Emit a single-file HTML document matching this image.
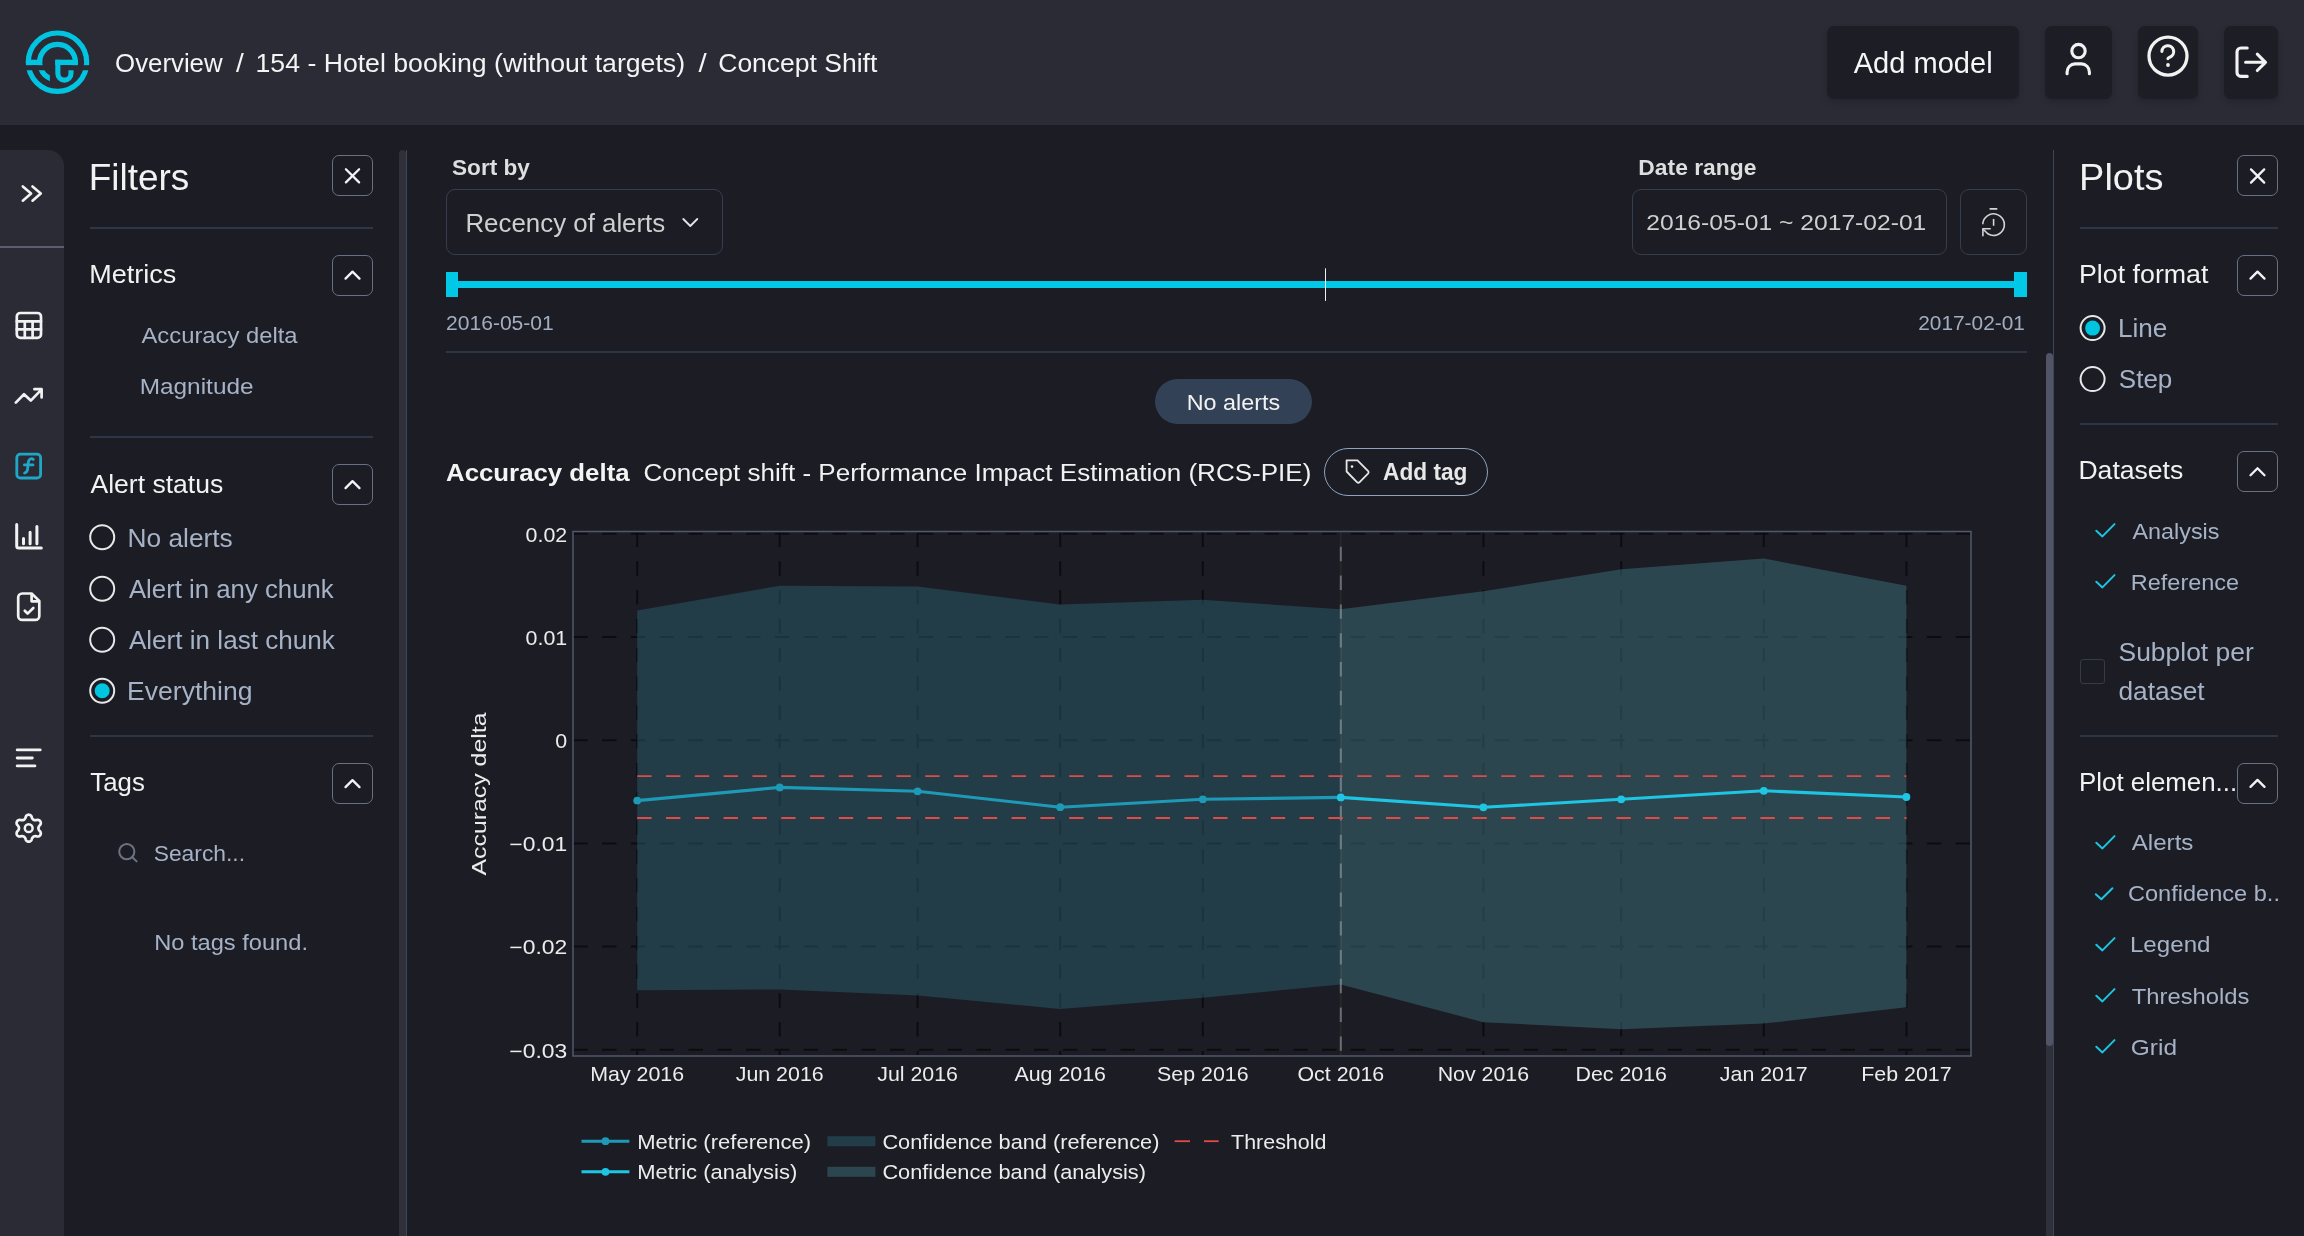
<!DOCTYPE html>
<html><head><meta charset="utf-8">
<style>
*{margin:0;padding:0;box-sizing:border-box}
html,body{width:2304px;height:1236px;overflow:hidden;background:#1c1c25;font-family:"Liberation Sans",sans-serif;color:#f2f2f2}
.a{position:absolute;white-space:nowrap}
.t{position:absolute;white-space:nowrap;line-height:1}
svg{position:absolute;overflow:visible}
.btn{position:absolute;border:1.6px solid #687184;border-radius:7px;background:#1c1c25}
.sep{position:absolute;height:2px;background:#2c3646}
.lbl{color:#a9b4c4}
</style></head><body>
<!-- HEADER -->
<div class="a" style="left:0;top:0;width:2304px;height:125px;background:#2b2b36"></div>
<svg style="left:0;top:0" width="120" height="125" viewBox="0 0 120 125">
<defs><clipPath id="fc"><rect x="0" y="70.25" width="49.9" height="30"/></clipPath></defs>
<g fill="none" stroke="#00c4e0" stroke-width="5.2">
<circle cx="57.5" cy="62.2" r="29.2"/>
<path d="M40.31,67 A17.85,17.85 0 1 1 74.69,67"/>
</g>
<g fill="#00c4e0">
<rect x="26.2" y="59.7" width="16" height="5.5"/>
<rect x="55.3" y="59.7" width="22.6" height="5.5"/>
</g>
<rect x="20" y="65.2" width="80" height="5.05" fill="#2b2b36"/>
<g fill="none" stroke="#00c4e0" stroke-width="5.1">
<path d="M40.06,66 A17.85,17.85 0 0 0 52,79.2" clip-path="url(#fc)"/>
<path d="M57.85,59.7 V73.5 A6.55,6.55 0 0 0 71,73.5 V70.25"/>
</g>
</svg>

<div class="a" style="left:1827px;top:26px;width:192px;height:72.6px;background:#1d1d26;border-radius:7px;box-shadow:0 3px 6px rgba(0,0,0,0.18)"></div>
<div class="a" style="left:2045px;top:26px;width:67px;height:72.6px;background:#1d1d26;border-radius:7px;box-shadow:0 3px 6px rgba(0,0,0,0.18)"></div>
<div class="a" style="left:2138px;top:26px;width:60px;height:72.6px;background:#1d1d26;border-radius:7px;box-shadow:0 3px 6px rgba(0,0,0,0.18)"></div>
<div class="a" style="left:2224px;top:26px;width:54px;height:72.6px;background:#1d1d26;border-radius:7px;box-shadow:0 3px 6px rgba(0,0,0,0.18)"></div>


<svg style="left:0;top:0" width="2304" height="125" viewBox="0 0 2304 125">
<g fill="none" stroke="#f2f2f2" stroke-width="3.1" stroke-linecap="round" stroke-linejoin="round">
<circle cx="2078.5" cy="51.1" r="6.7"/>
<path d="M2067.1,73.7 v-1.8 a8,8 0 0 1 8,-8 h6.3 a8,8 0 0 1 8,8 v1.8"/>
<circle cx="2168" cy="56.1" r="19" stroke-width="3.3"/>
<path d="M2161.9,51.4 A5.9,5.9 0 1 1 2170.2,57 Q2167.9,57.9 2167.9,58.6"/>
<path d="M2247.2,48 H2241 a4,4 0 0 0 -4,4 V72.4 a4,4 0 0 0 4,4 H2247.2"/>
<path d="M2245.6,62.3 H2265.5 M2257.3,54.2 L2265.5,62.3 L2257.3,70.5"/>
</g>
<circle cx="2168" cy="65" r="1.9" fill="#f2f2f2"/>
</svg>

<!-- LEFT SIDEBAR -->
<div class="a" style="left:0;top:150px;width:64px;height:1086px;background:#2b2b36;border-top-right-radius:16px"></div>
<div class="a" style="left:0;top:246px;width:64px;height:2px;background:#5a6070"></div>


<svg style="left:0;top:0" width="64" height="1236" viewBox="0 0 64 1236">
<g fill="none" stroke="#f2f2f2" stroke-width="2.7" stroke-linecap="round" stroke-linejoin="round">
<path d="M22.8,186.4 L31.1,193.4 L22.8,200.7 M32.5,186.4 L40.8,193.4 L32.5,200.7" stroke-width="2.6"/>
<rect x="16.8" y="313" width="24.2" height="24.8" rx="3.6"/>
<path d="M16.8,321.4 H41 M16.8,329.4 H41 M24.8,321.4 V337.8 M32.6,321.4 V337.8"/>
<path d="M15.8,402.6 L24,394.2 L30.8,400.6 L41.4,389.6 M34.4,389.2 H41.6 V397.4"/>
<path d="M16.7,524.4 V546 a2,2 0 0 0 2,2 H41.3 M23.5,538.6 V543.8 M30.1,532.2 V543.8 M36.9,526.4 V543.8" stroke-width="3"/>
<path d="M31.6,593.5 H22.2 a4,4 0 0 0 -4,4 V615.9 a4,4 0 0 0 4,4 H35.3 a4,4 0 0 0 4,-4 V600.9 Z M31.6,593.5 V601.3 H39.3"/>
<path d="M24.8,610.7 L27.6,613.6 L33.3,608"/>
<path d="M17.2,749.9 H40.2 M17.2,758 H32.3 M17.2,765.9 H34.9" stroke-width="2.9"/>
</g>
<g fill="none" stroke="#1fa8c6" stroke-width="2.8" stroke-linecap="round" stroke-linejoin="round">
<rect x="16.8" y="454.2" width="23.8" height="23.8" rx="3.6"/>
<path d="M33.3,459.4 C31,457.6 28.6,459.6 28.3,462.5 L27.6,468.8 C27.2,472.4 25.8,472.6 24.6,473 M24.4,464.9 H33"/>
</g>
<g transform="translate(28.7,828.2)" fill="none" stroke="#f2f2f2" stroke-width="2.7" stroke-linejoin="round">
<path d="M9.70,0.00 L9.74,0.43 L9.84,0.86 L10.02,1.32 L10.27,1.81 L10.60,2.35 L11.20,3.00 L11.77,3.71 L12.00,4.37 L12.09,5.01 L12.07,5.63 L11.93,6.21 L11.69,6.75 L11.35,7.23 L10.91,7.64 L10.39,7.97 L9.78,8.21 L9.10,8.34 L8.20,8.20 L7.34,8.01 L6.70,7.99 L6.15,8.02 L5.67,8.09 L5.24,8.22 L4.85,8.40 L4.50,8.64 L4.18,8.96 L3.87,9.34 L3.57,9.80 L3.27,10.36 L3.00,11.20 L2.67,12.05 L2.22,12.58 L1.71,12.98 L1.16,13.27 L0.59,13.44 L0.00,13.50 L-0.59,13.44 L-1.16,13.27 L-1.71,12.98 L-2.22,12.58 L-2.67,12.05 L-3.00,11.20 L-3.27,10.36 L-3.57,9.80 L-3.87,9.34 L-4.18,8.96 L-4.50,8.64 L-4.85,8.40 L-5.24,8.22 L-5.67,8.09 L-6.15,8.02 L-6.70,7.99 L-7.34,8.01 L-8.20,8.20 L-9.10,8.34 L-9.78,8.21 L-10.39,7.97 L-10.91,7.64 L-11.35,7.23 L-11.69,6.75 L-11.93,6.21 L-12.07,5.63 L-12.09,5.01 L-12.00,4.37 L-11.77,3.71 L-11.20,3.00 L-10.60,2.35 L-10.27,1.81 L-10.02,1.32 L-9.84,0.86 L-9.74,0.43 L-9.70,0.00 L-9.74,-0.43 L-9.84,-0.86 L-10.02,-1.32 L-10.27,-1.81 L-10.60,-2.35 L-11.20,-3.00 L-11.77,-3.71 L-12.00,-4.37 L-12.09,-5.01 L-12.07,-5.63 L-11.93,-6.21 L-11.69,-6.75 L-11.35,-7.23 L-10.91,-7.64 L-10.39,-7.97 L-9.78,-8.21 L-9.10,-8.34 L-8.20,-8.20 L-7.34,-8.01 L-6.70,-7.99 L-6.15,-8.02 L-5.67,-8.09 L-5.24,-8.22 L-4.85,-8.40 L-4.50,-8.64 L-4.18,-8.96 L-3.87,-9.34 L-3.57,-9.80 L-3.27,-10.36 L-3.00,-11.20 L-2.67,-12.05 L-2.22,-12.58 L-1.71,-12.98 L-1.16,-13.27 L-0.59,-13.44 L-0.00,-13.50 L0.59,-13.44 L1.16,-13.27 L1.71,-12.98 L2.22,-12.58 L2.67,-12.05 L3.00,-11.20 L3.27,-10.36 L3.57,-9.80 L3.87,-9.34 L4.18,-8.96 L4.50,-8.64 L4.85,-8.40 L5.24,-8.22 L5.67,-8.09 L6.15,-8.02 L6.70,-7.99 L7.34,-8.01 L8.20,-8.20 L9.10,-8.34 L9.78,-8.21 L10.39,-7.97 L10.91,-7.64 L11.35,-7.23 L11.69,-6.75 L11.93,-6.21 L12.07,-5.63 L12.09,-5.01 L12.00,-4.37 L11.77,-3.71 L11.20,-3.00 L10.60,-2.35 L10.27,-1.81 L10.02,-1.32 L9.84,-0.86 L9.74,-0.43 Z"/>
<circle r="3.9" stroke-width="2.5"/>
</g>
</svg>

<!-- FILTER PANEL -->
<div class="btn" style="left:332px;top:155px;width:41px;height:41px"></div>
<div class="sep" style="left:90px;top:227px;width:283px"></div>
<div class="btn" style="left:332px;top:255px;width:41px;height:41px"></div>
<div class="sep" style="left:90px;top:436px;width:283px"></div>
<div class="btn" style="left:332px;top:464px;width:41px;height:41px"></div>
<div class="sep" style="left:90px;top:735px;width:283px"></div>
<div class="btn" style="left:332px;top:763px;width:41px;height:41px"></div>
<div class="a" style="left:399px;top:150px;width:7px;height:1100px;background:#30303a;border-radius:3.5px"></div><div class="a" style="left:405.8px;top:150px;width:1.4px;height:1086px;background:#3a465a"></div>



<!-- MAIN -->
<div class="a" style="left:446px;top:189px;width:277px;height:66px;border:1.5px solid #343e4e;border-radius:9px"></div>
<div class="a" style="left:1632px;top:189px;width:315px;height:66px;border:1.5px solid #343e4e;border-radius:9px"></div>
<div class="a" style="left:1960px;top:189px;width:67px;height:66px;border:1.5px solid #343e4e;border-radius:9px"></div>
<div class="a" style="left:446px;top:281px;width:1580px;height:7px;background:#00c8e6"></div>
<div class="a" style="left:446px;top:272px;width:12px;height:25px;background:#00c8e6"></div>
<div class="a" style="left:2014px;top:272px;width:13px;height:25px;background:#00c8e6"></div>
<div class="a" style="left:1324.8px;top:268.4px;width:1.7px;height:32.6px;background:#f0f0f0;border-radius:1px"></div>
<div class="a" style="left:446px;top:351px;width:1581px;height:2px;background:#2c3646"></div>
<div class="a" style="left:1155px;top:379px;width:157px;height:45px;background:#324155;border-radius:23px"></div>
<div class="a" style="left:1324px;top:448px;width:164px;height:48px;border:1.9px solid #8fa3bc;border-radius:24px"></div>
<svg style="left:0;top:0" width="2304" height="1236" viewBox="0 0 2304 1236">
<g fill="none" stroke="#e6e6e6" stroke-width="1.8" stroke-linecap="round" stroke-linejoin="round">
<path d="M683.3,219 L690.3,226 L697.3,219"/>
<path d="M1346.6,460.3 H1357.5 L1368.4,471.4 Q1369,472.6 1368,473.7 L1359.4,482.3 Q1358.3,483.3 1357.2,482.3 L1346.6,471.5 Z"/>
</g>
<circle cx="1352" cy="466.6" r="1.3" fill="#e6e6e6"/>
<g fill="none" stroke="#d4d4d4" stroke-width="1.6" stroke-linecap="round" stroke-linejoin="round">
<path d="M1990.2,208.9 H1996.7"/>
<path d="M1993.6,219.6 V225.2"/>
<path d="M1982.8,223.6 A10.8,10.8 0 1 1 1987.8,233.8 L1983.2,229.3"/>
<path d="M1990.2,228.8 H1982.9 V235.8"/>
</g>
</svg>
<!-- main scrollbar -->
<div class="a" style="left:2046px;top:1040px;width:7px;height:200px;background:#30303a"></div><div class="a" style="left:2052.8px;top:150px;width:1.5px;height:1086px;background:#3a465a"></div>
<div class="a" style="left:2046px;top:353px;width:7px;height:693px;background:#505464;border-radius:3.5px"></div>

<!-- PLOTS PANEL -->
<div class="btn" style="left:2237px;top:155px;width:41px;height:41px"></div>
<div class="sep" style="left:2080px;top:227px;width:198px"></div>
<div class="btn" style="left:2237px;top:255px;width:41px;height:41px"></div>
<div class="sep" style="left:2080px;top:423px;width:198px"></div>
<div class="btn" style="left:2237px;top:451px;width:41px;height:41px"></div>
<div class="a" style="left:2080px;top:659px;width:25px;height:25px;border:1.5px solid #323c4c;border-radius:3px"></div>
<div class="sep" style="left:2080px;top:735px;width:198px"></div>
<div class="btn" style="left:2237px;top:763px;width:41px;height:41px"></div>
<svg style="left:0;top:0" width="2304" height="1236" viewBox="0 0 2304 1236">
<g fill="none" stroke="#1ec4e0" stroke-width="2" stroke-linecap="round" stroke-linejoin="round">
<path d="M2096.3,530.7 L2102.4,536.4 L2114.5,524.1"/>
<path d="M2096.3,581.7 L2102.4,587.4 L2114.5,575.1"/>
<path d="M2096.3,842.7 L2102.4,848.4 L2114.5,836.1"/>
<path d="M2095.8,894.2 L2101.3,899.3 L2112.4,888.3"/>
<path d="M2096.3,944.7 L2102.4,950.4 L2114.5,938.1"/>
<path d="M2096.3,995.7 L2102.4,1001.4 L2114.5,989.1"/>
<path d="M2096.3,1046.7 L2102.4,1052.4 L2114.5,1040.1"/>
</g>
</svg>

<!-- CHART -->
<svg style="left:0;top:0" width="2304" height="1236" viewBox="0 0 2304 1236">
<g stroke="#0c0c10" stroke-width="2" stroke-dasharray="14.4 14.4">
<line x1="573.3" y1="533.8" x2="1971" y2="533.8"/><line x1="573.3" y1="637.0" x2="1971" y2="637.0"/><line x1="573.3" y1="740.2" x2="1971" y2="740.2"/><line x1="573.3" y1="843.4" x2="1971" y2="843.4"/><line x1="573.3" y1="946.6" x2="1971" y2="946.6"/><line x1="573.3" y1="1049.8" x2="1971" y2="1049.8"/><line x1="637.2" y1="532.5" x2="637.2" y2="1055"/><line x1="779.7" y1="532.5" x2="779.7" y2="1055"/><line x1="917.6" y1="532.5" x2="917.6" y2="1055"/><line x1="1060.2" y1="532.5" x2="1060.2" y2="1055"/><line x1="1202.8" y1="532.5" x2="1202.8" y2="1055"/><line x1="1340.8" y1="532.5" x2="1340.8" y2="1055"/><line x1="1483.4" y1="532.5" x2="1483.4" y2="1055"/><line x1="1621.2" y1="532.5" x2="1621.2" y2="1055"/><line x1="1763.8" y1="532.5" x2="1763.8" y2="1055"/><line x1="1906.4" y1="532.5" x2="1906.4" y2="1055"/>
</g>
<polygon points="637.2,610.6 779.7,585.7 917.6,586.6 1060.2,604.5 1202.8,599.8 1340.8,609.2 1340.8,984.6 1202.8,997.8 1060.2,1009.0 917.6,995.5 779.7,989.4 637.2,990.3" fill="#285c6b" fill-opacity="0.5" />
<polygon points="1340.8,609.2 1483.4,591.3 1621.2,569.3 1763.8,558.5 1906.4,585.7 1906.4,1007.2 1763.8,1023.6 1621.2,1029.2 1483.4,1022.2 1340.8,984.6" fill="#3c707b" fill-opacity="0.5" />
<line x1="1340.8" y1="532.5" x2="1340.8" y2="1055" stroke="#c8c8c8" stroke-opacity="0.15" stroke-width="2"/><line x1="1340.8" y1="546.8" x2="1340.8" y2="1055" stroke="#c8c8c8" stroke-opacity="0.37" stroke-width="2" stroke-dasharray="14.4 14.4"/>
<rect x="573" y="531.5" width="1398" height="524.5" fill="none" stroke="#50586a" stroke-width="1.5"/>
<g stroke="#e04a48" stroke-width="1.8" stroke-dasharray="14.4 14.4"><line x1="637.2" y1="776.2" x2="1906.4" y2="776.2"/><line x1="637.2" y1="818" x2="1906.4" y2="818"/></g>
<polyline points="637.2,800.6 779.7,787.4 917.6,791.3 1060.2,807.2 1202.8,799.3 1340.8,797.4" fill="none" stroke="#1e9ab6" stroke-width="3.1" stroke-linejoin="round"/>
<polyline points="1340.8,797.4 1483.4,807.3 1621.2,799.3 1763.8,790.8 1906.4,797.0" fill="none" stroke="#1ec6e4" stroke-width="3.1" stroke-linejoin="round"/>
<g fill="#1e9ab6"><circle cx="637.2" cy="800.6" r="3.9"/><circle cx="779.7" cy="787.4" r="3.9"/><circle cx="917.6" cy="791.3" r="3.9"/><circle cx="1060.2" cy="807.2" r="3.9"/><circle cx="1202.8" cy="799.3" r="3.9"/></g>
<g fill="#1ec6e4"><circle cx="1340.8" cy="797.4" r="3.9"/><circle cx="1483.4" cy="807.3" r="3.9"/><circle cx="1621.2" cy="799.3" r="3.9"/><circle cx="1763.8" cy="790.8" r="3.9"/><circle cx="1906.4" cy="797.0" r="3.9"/></g>
<g stroke-width="3.1"><line x1="581.5" y1="1141.2" x2="629.4" y2="1141.2" stroke="#1e9ab6"/><circle cx="605.5" cy="1141.2" r="3.9" fill="#1e9ab6"/><line x1="581.5" y1="1171.8" x2="629.4" y2="1171.8" stroke="#1ec6e4"/><circle cx="605.5" cy="1171.8" r="3.9" fill="#1ec6e4"/></g>
<rect x="827.4" y="1136.2" width="48" height="10" fill="#285c6b" fill-opacity="0.5"/><rect x="827.4" y="1166.8" width="48" height="10" fill="#3c707b" fill-opacity="0.5"/>
<g stroke="#e04a48" stroke-width="1.8"><line x1="1174.6" y1="1141.2" x2="1190" y2="1141.2"/><line x1="1204" y1="1141.2" x2="1218.7" y2="1141.2"/></g>
</svg>
<svg style="left:0;top:0" width="2304" height="1236" viewBox="0 0 2304 1236"><g fill="none" stroke="#f2f2f2" stroke-width="2.3" stroke-linecap="round" stroke-linejoin="round"><path d="M345.9,169.2 L359.1,182.4 M359.1,169.2 L345.9,182.4"/><path d="M345.5,278.6 L352.5,271.6 L359.5,278.6"/><path d="M345.5,488.1 L352.5,481.1 L359.5,488.1"/><path d="M345.5,787.1 L352.5,780.1 L359.5,787.1"/><path d="M2251.0,169.4 L2264.2,182.6 M2264.2,169.4 L2251.0,182.6"/><path d="M2250.5,278.6 L2257.5,271.6 L2264.5,278.6"/><path d="M2250.5,475.3 L2257.5,468.3 L2264.5,475.3"/><path d="M2250.5,786.9 L2257.5,779.9 L2264.5,786.9"/></g><g fill="none" stroke="#e8e8e8" stroke-width="2"><circle cx="102.2" cy="537.3" r="12"/><circle cx="102.2" cy="588.8" r="12"/><circle cx="102.2" cy="639.8" r="12"/><circle cx="102.2" cy="690.8" r="12"/><circle cx="2092.6" cy="328.1" r="12"/><circle cx="2092.6" cy="379.1" r="12"/></g><circle cx="102.2" cy="690.8" r="7.5" fill="#00c4e0"/><circle cx="2092.6" cy="328.1" r="7.5" fill="#00c4e0"/><g fill="none" stroke="#6b7383" stroke-width="2" stroke-linecap="round"><circle cx="126.8" cy="851.6" r="7.6"/><path d="M132.4,857.2 L136.6,861.4"/></g></svg>
<!-- TEXT -->
<svg style="left:0;top:0;will-change:transform" width="2304" height="1236" viewBox="0 0 2304 1236" font-family="Liberation Sans">
<text x="115.08" y="72.10" font-size="25.50" font-weight="400" fill="#f4f4f4" textLength="107.52" lengthAdjust="spacingAndGlyphs">Overview</text>
<text x="235.90" y="72.10" font-size="25.50" font-weight="400" fill="#f4f4f4" textLength="7.78" lengthAdjust="spacingAndGlyphs">/</text>
<text x="255.52" y="72.10" font-size="25.50" font-weight="400" fill="#f4f4f4" textLength="429.54" lengthAdjust="spacingAndGlyphs">154 - Hotel booking (without targets)</text>
<text x="698.56" y="72.10" font-size="25.50" font-weight="400" fill="#f4f4f4" textLength="8.20" lengthAdjust="spacingAndGlyphs">/</text>
<text x="718.26" y="72.10" font-size="25.50" font-weight="400" fill="#f4f4f4" textLength="159.00" lengthAdjust="spacingAndGlyphs">Concept Shift</text>
<text x="1853.74" y="72.80" font-size="28.80" font-weight="400" fill="#f6f6f6" textLength="138.90" lengthAdjust="spacingAndGlyphs">Add model</text>
<text x="88.70" y="190.30" font-size="37.70" font-weight="400" fill="#f2f2f2" textLength="100.54" lengthAdjust="spacingAndGlyphs">Filters</text>
<text x="89.18" y="282.90" font-size="25.40" font-weight="400" fill="#f2f2f2" textLength="87.06" lengthAdjust="spacingAndGlyphs">Metrics</text>
<text x="141.48" y="342.50" font-size="22.30" font-weight="400" fill="#a6b3c6" textLength="156.12" lengthAdjust="spacingAndGlyphs">Accuracy delta</text>
<text x="139.68" y="393.50" font-size="22.30" font-weight="400" fill="#a6b3c6" textLength="113.90" lengthAdjust="spacingAndGlyphs">Magnitude</text>
<text x="90.48" y="492.70" font-size="25.90" font-weight="400" fill="#f2f2f2" textLength="132.84" lengthAdjust="spacingAndGlyphs">Alert status</text>
<text x="127.52" y="546.90" font-size="25.90" font-weight="400" fill="#a6b3c6" textLength="105.22" lengthAdjust="spacingAndGlyphs">No alerts</text>
<text x="128.90" y="597.90" font-size="25.90" font-weight="400" fill="#a6b3c6" textLength="204.86" lengthAdjust="spacingAndGlyphs">Alert in any chunk</text>
<text x="128.90" y="648.90" font-size="25.90" font-weight="400" fill="#a6b3c6" textLength="205.94" lengthAdjust="spacingAndGlyphs">Alert in last chunk</text>
<text x="127.10" y="699.90" font-size="25.90" font-weight="400" fill="#a6b3c6" textLength="125.46" lengthAdjust="spacingAndGlyphs">Everything</text>
<text x="90.32" y="791.30" font-size="25.40" font-weight="400" fill="#f2f2f2" textLength="54.50" lengthAdjust="spacingAndGlyphs">Tags</text>
<text x="153.66" y="861.20" font-size="22.90" font-weight="400" fill="#a6b3c6" textLength="91.40" lengthAdjust="spacingAndGlyphs">Search...</text>
<text x="154.18" y="949.90" font-size="22.90" font-weight="400" fill="#a6b3c6" textLength="153.80" lengthAdjust="spacingAndGlyphs">No tags found.</text>
<text x="452.00" y="174.50" font-size="22.90" font-weight="700" fill="#dedede" textLength="77.92" lengthAdjust="spacingAndGlyphs">Sort by</text>
<text x="465.44" y="232.30" font-size="25.80" font-weight="400" fill="#cfcfcf" textLength="199.80" lengthAdjust="spacingAndGlyphs">Recency of alerts</text>
<text x="1638.34" y="174.70" font-size="22.90" font-weight="700" fill="#dedede" textLength="118.08" lengthAdjust="spacingAndGlyphs">Date range</text>
<text x="1646.26" y="230.30" font-size="22.50" font-weight="400" fill="#cfcfcf" textLength="280.06" lengthAdjust="spacingAndGlyphs">2016-05-01 ~ 2017-02-01</text>
<text x="446.08" y="330.40" font-size="19.70" font-weight="400" fill="#a2aec0" textLength="107.66" lengthAdjust="spacingAndGlyphs">2016-05-01</text>
<text x="1918.24" y="330.40" font-size="19.70" font-weight="400" fill="#a2aec0" textLength="106.66" lengthAdjust="spacingAndGlyphs">2017-02-01</text>
<text x="1186.68" y="409.50" font-size="22.70" font-weight="400" fill="#f2f2f2" textLength="93.48" lengthAdjust="spacingAndGlyphs">No alerts</text>
<text x="446.00" y="481.30" font-size="24.70" font-weight="700" fill="#f4f4f4" textLength="183.60" lengthAdjust="spacingAndGlyphs">Accuracy delta</text>
<text x="643.42" y="481.40" font-size="24.70" font-weight="400" fill="#f2f2f2" textLength="667.90" lengthAdjust="spacingAndGlyphs">Concept shift - Performance Impact Estimation (RCS-PIE)</text>
<text x="1383.00" y="480.00" font-size="23.20" font-weight="700" fill="#e8e8e8" textLength="84.40" lengthAdjust="spacingAndGlyphs">Add tag</text>
<text x="2079.12" y="190.40" font-size="37.70" font-weight="400" fill="#f2f2f2" textLength="84.28" lengthAdjust="spacingAndGlyphs">Plots</text>
<text x="2079.02" y="283.10" font-size="25.40" font-weight="400" fill="#f2f2f2" textLength="129.40" lengthAdjust="spacingAndGlyphs">Plot format</text>
<text x="2117.94" y="337.10" font-size="25.90" font-weight="400" fill="#a6b3c6" textLength="49.38" lengthAdjust="spacingAndGlyphs">Line</text>
<text x="2118.84" y="387.60" font-size="25.90" font-weight="400" fill="#a6b3c6" textLength="53.48" lengthAdjust="spacingAndGlyphs">Step</text>
<text x="2078.44" y="479.40" font-size="25.40" font-weight="400" fill="#f2f2f2" textLength="104.80" lengthAdjust="spacingAndGlyphs">Datasets</text>
<text x="2132.56" y="538.90" font-size="22.30" font-weight="400" fill="#a6b3c6" textLength="86.94" lengthAdjust="spacingAndGlyphs">Analysis</text>
<text x="2130.76" y="590.20" font-size="22.30" font-weight="400" fill="#a6b3c6" textLength="108.40" lengthAdjust="spacingAndGlyphs">Reference</text>
<text x="2118.50" y="661.00" font-size="25.90" font-weight="400" fill="#a6b3c6" textLength="135.26" lengthAdjust="spacingAndGlyphs">Subplot per</text>
<text x="2118.50" y="699.70" font-size="25.90" font-weight="400" fill="#a6b3c6" textLength="86.18" lengthAdjust="spacingAndGlyphs">dataset</text>
<text x="2079.02" y="791.30" font-size="25.40" font-weight="400" fill="#f2f2f2" textLength="158.12" lengthAdjust="spacingAndGlyphs">Plot elemen...</text>
<text x="2131.74" y="850.20" font-size="22.30" font-weight="400" fill="#a6b3c6" textLength="61.68" lengthAdjust="spacingAndGlyphs">Alerts</text>
<text x="2127.92" y="901.30" font-size="22.30" font-weight="400" fill="#a6b3c6" textLength="152.06" lengthAdjust="spacingAndGlyphs">Confidence b..</text>
<text x="2129.94" y="952.40" font-size="22.30" font-weight="400" fill="#a6b3c6" textLength="80.54" lengthAdjust="spacingAndGlyphs">Legend</text>
<text x="2131.74" y="1003.50" font-size="22.30" font-weight="400" fill="#a6b3c6" textLength="117.76" lengthAdjust="spacingAndGlyphs">Thresholds</text>
<text x="2130.84" y="1054.60" font-size="22.30" font-weight="400" fill="#a6b3c6" textLength="46.14" lengthAdjust="spacingAndGlyphs">Grid</text>
<text x="637.26" y="1149.10" font-size="19.30" font-weight="400" fill="#ececec" textLength="173.90" lengthAdjust="spacingAndGlyphs">Metric (reference)</text>
<text x="637.26" y="1178.90" font-size="19.30" font-weight="400" fill="#ececec" textLength="159.98" lengthAdjust="spacingAndGlyphs">Metric (analysis)</text>
<text x="882.42" y="1149.10" font-size="19.30" font-weight="400" fill="#ececec" textLength="277.06" lengthAdjust="spacingAndGlyphs">Confidence band (reference)</text>
<text x="882.42" y="1178.90" font-size="19.30" font-weight="400" fill="#ececec" textLength="263.56" lengthAdjust="spacingAndGlyphs">Confidence band (analysis)</text>
<text x="1231.08" y="1149.10" font-size="19.30" font-weight="400" fill="#ececec" textLength="95.32" lengthAdjust="spacingAndGlyphs">Threshold</text>
<text transform="translate(637.2,1081) scale(1.080,1)" text-anchor="middle" font-size="19.80" fill="#ececec">May 2016</text>
<text transform="translate(779.7,1081) scale(1.080,1)" text-anchor="middle" font-size="19.80" fill="#ececec">Jun 2016</text>
<text transform="translate(917.6,1081) scale(1.080,1)" text-anchor="middle" font-size="19.80" fill="#ececec">Jul 2016</text>
<text transform="translate(1060.2,1081) scale(1.080,1)" text-anchor="middle" font-size="19.80" fill="#ececec">Aug 2016</text>
<text transform="translate(1202.8,1081) scale(1.080,1)" text-anchor="middle" font-size="19.80" fill="#ececec">Sep 2016</text>
<text transform="translate(1340.8,1081) scale(1.080,1)" text-anchor="middle" font-size="19.80" fill="#ececec">Oct 2016</text>
<text transform="translate(1483.4,1081) scale(1.080,1)" text-anchor="middle" font-size="19.80" fill="#ececec">Nov 2016</text>
<text transform="translate(1621.2,1081) scale(1.080,1)" text-anchor="middle" font-size="19.80" fill="#ececec">Dec 2016</text>
<text transform="translate(1763.8,1081) scale(1.080,1)" text-anchor="middle" font-size="19.80" fill="#ececec">Jan 2017</text>
<text transform="translate(1906.4,1081) scale(1.080,1)" text-anchor="middle" font-size="19.80" fill="#ececec">Feb 2017</text>
<text transform="translate(567.2,541.5) scale(1.080,1)" text-anchor="end" font-size="19.80" fill="#ececec">0.02</text>
<text transform="translate(567.2,644.7) scale(1.080,1)" text-anchor="end" font-size="19.80" fill="#ececec">0.01</text>
<text transform="translate(567.2,747.9) scale(1.080,1)" text-anchor="end" font-size="19.80" fill="#ececec">0</text>
<text transform="translate(567.2,851.1) scale(1.156,1)" text-anchor="end" font-size="19.80" fill="#ececec">−0.01</text>
<text transform="translate(567.2,954.3) scale(1.156,1)" text-anchor="end" font-size="19.80" fill="#ececec">−0.02</text>
<text transform="translate(567.2,1057.5) scale(1.156,1)" text-anchor="end" font-size="19.80" fill="#ececec">−0.03</text>
<text transform="translate(486.0,794) rotate(-90)" text-anchor="middle" font-size="19.60" fill="#ececec" textLength="163.0" lengthAdjust="spacingAndGlyphs">Accuracy delta</text>
</svg>
</body></html>
